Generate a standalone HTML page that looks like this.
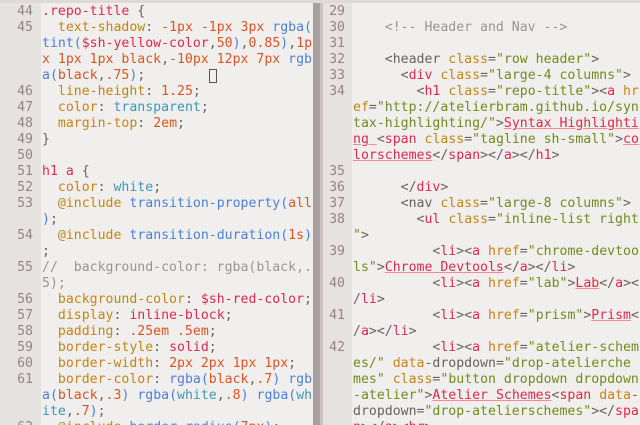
<!DOCTYPE html>
<html><head><meta charset="utf-8"><style>
*{margin:0;padding:0}
body{width:640px;height:425px;overflow:hidden;background:#f1efee;position:relative;font-family:"DejaVu Sans Mono","Liberation Mono",monospace;font-size:13.2px;color:#68615e}
.top{position:absolute;left:0;top:0;width:640px;height:3px;background:#dedad8}
.pane{position:absolute;top:3px;height:422px;overflow:hidden;background:#f1efee}
.g{position:absolute;top:0;height:100%;background:#e6e2e0}
.row{height:16px;line-height:16px;white-space:pre;position:relative}
.n{position:absolute;text-align:right;color:#8e8683}
.t{position:absolute;top:0}
.r{color:#e0284a}.o{color:#df5320}.y{color:#c38418}.b{color:#4d7fd8}.c{color:#3d97b8}.m{color:#9c9491}.s{color:#6f8b1e}
.u{color:#e0284a;text-decoration:underline;text-decoration-color:#f08c9a}
.cur{display:inline-block;width:8px;height:14px;border:1px solid #555;box-sizing:border-box;vertical-align:middle;position:absolute;left:209px;top:1px}
</style></head><body>
<div class="top"></div>
<div class="pane" style="left:0;width:313px">
<div class="g" style="left:0;width:41px"></div>
<div style="position:absolute;left:0;top:1px;width:313px">
<div class="row"><span class="n" style="width:33px">44</span><span class="t" style="left:42px"><span class="r">.repo-title</span> {</span></div>
<div class="row"><span class="n" style="width:33px">45</span><span class="t" style="left:42px">  <span class="y">text-shadow</span>: <span class="o">-1px -1px 3px</span> <span class="b">rgba(</span></span></div>
<div class="row"><span class="t" style="left:42px"><span class="b">tint(</span><span class="r">$sh-yellow-color</span>,<span class="o">50</span><span class="b">)</span>,<span class="o">0.85</span><span class="b">)</span>,<span class="o">1p</span></span></div>
<div class="row"><span class="t" style="left:42px"><span class="o">x 1px 1px black</span>,<span class="o">-10px 12px 7px</span> <span class="b">rgb</span></span></div>
<div class="row"><span class="t" style="left:42px"><span class="b">a(</span><span class="o">black</span>,<span class="o">.75</span><span class="b">)</span>;</span><span class="cur"></span></div>
<div class="row"><span class="n" style="width:33px">46</span><span class="t" style="left:42px">  <span class="y">line-height</span>: <span class="o">1.25</span>;</span></div>
<div class="row"><span class="n" style="width:33px">47</span><span class="t" style="left:42px">  <span class="y">color</span>: <span class="c">transparent</span>;</span></div>
<div class="row"><span class="n" style="width:33px">48</span><span class="t" style="left:42px">  <span class="y">margin-top</span>: <span class="o">2em</span>;</span></div>
<div class="row"><span class="n" style="width:33px">49</span><span class="t" style="left:42px">}</span></div>
<div class="row"><span class="n" style="width:33px">50</span></div>
<div class="row"><span class="n" style="width:33px">51</span><span class="t" style="left:42px"><span class="r">h1 a</span> {</span></div>
<div class="row"><span class="n" style="width:33px">52</span><span class="t" style="left:42px">  <span class="y">color</span>: <span class="c">white</span>;</span></div>
<div class="row"><span class="n" style="width:33px">53</span><span class="t" style="left:42px">  <span class="y">@include</span> <span class="b">transition-property(</span><span class="o">all</span></span></div>
<div class="row"><span class="t" style="left:42px"><span class="b">)</span>;</span></div>
<div class="row"><span class="n" style="width:33px">54</span><span class="t" style="left:42px">  <span class="y">@include</span> <span class="b">transition-duration(</span><span class="o">1s</span><span class="b">)</span></span></div>
<div class="row"><span class="t" style="left:42px">;</span></div>
<div class="row"><span class="n" style="width:33px">55</span><span class="t m" style="left:42px">//  background-color: rgba(black,.</span></div>
<div class="row"><span class="t m" style="left:42px">5);</span></div>
<div class="row"><span class="n" style="width:33px">56</span><span class="t" style="left:42px">  <span class="y">background-color</span>: <span class="r">$sh-red-color</span>;</span></div>
<div class="row"><span class="n" style="width:33px">57</span><span class="t" style="left:42px">  <span class="y">display</span>: <span class="r">inline-block</span>;</span></div>
<div class="row"><span class="n" style="width:33px">58</span><span class="t" style="left:42px">  <span class="y">padding</span>: <span class="o">.25em .5em</span>;</span></div>
<div class="row"><span class="n" style="width:33px">59</span><span class="t" style="left:42px">  <span class="y">border-style</span>: <span class="r">solid</span>;</span></div>
<div class="row"><span class="n" style="width:33px">60</span><span class="t" style="left:42px">  <span class="y">border-width</span>: <span class="o">2px 2px 1px 1px</span>;</span></div>
<div class="row"><span class="n" style="width:33px">61</span><span class="t" style="left:42px">  <span class="y">border-color</span>: <span class="b">rgba(</span><span class="o">black</span>,<span class="o">.7</span><span class="b">)</span> <span class="b">rgb</span></span></div>
<div class="row"><span class="t" style="left:42px"><span class="b">a(</span><span class="o">black</span>,<span class="o">.3</span><span class="b">)</span> <span class="b">rgba(</span><span class="c">white</span>,<span class="o">.8</span><span class="b">)</span> <span class="b">rgba(</span><span class="c">wh</span></span></div>
<div class="row"><span class="t" style="left:42px"><span class="c">ite</span>,<span class="o">.7</span><span class="b">)</span>;</span></div>
<div class="row"><span class="n" style="width:33px">62</span><span class="t" style="left:42px">  <span class="y">@include</span> <span class="b">border-radius(</span><span class="o">7px</span><span class="b">)</span>;</span></div>
</div>
</div>
<div style="position:absolute;left:313px;top:3px;width:7px;height:422px;background:#a8a19f"></div>
<div class="pane" style="left:320px;width:320px">
<div class="g" style="left:0;width:32px"></div>
<div class="g" style="left:0;width:3px;background:#c9c4c1"></div>
<div style="position:absolute;left:0;top:1px;width:320px">
<div class="row"><span class="n" style="width:25px">29</span></div>
<div class="row"><span class="n" style="width:25px">30</span><span class="t m" style="left:33px">    &lt;!-- Header and Nav --&gt;</span></div>
<div class="row"><span class="n" style="width:25px">31</span></div>
<div class="row"><span class="n" style="width:25px">32</span><span class="t" style="left:33px">    &lt;header <span class="y">class</span>=<span class="s">"row header"</span>&gt;</span></div>
<div class="row"><span class="n" style="width:25px">33</span><span class="t" style="left:33px">      &lt;<span class="r">div</span> <span class="y">class</span>=<span class="s">"large-4 columns"</span>&gt;</span></div>
<div class="row"><span class="n" style="width:25px">34</span><span class="t" style="left:33px">        &lt;<span class="r">h1</span> <span class="y">class</span>=<span class="s">"repo-title"</span>&gt;&lt;<span class="r">a</span> <span class="y">hr</span></span></div>
<div class="row"><span class="t" style="left:33px"><span class="y">ef</span>=<span class="s">"http://atelierbram.github.io/syn</span></span></div>
<div class="row"><span class="t" style="left:33px"><span class="s">tax-highlighting/"</span>&gt;<span class="u">Syntax Highlighti</span></span></div>
<div class="row"><span class="t" style="left:33px"><span class="u">ng </span>&lt;<span class="r">span</span> <span class="y">class</span>=<span class="s">"tagline sh-small"</span>&gt;<span class="u">co</span></span></div>
<div class="row"><span class="t" style="left:33px"><span class="u">lorschemes</span>&lt;/<span class="r">span</span>&gt;&lt;/<span class="r">a</span>&gt;&lt;/<span class="r">h1</span>&gt;</span></div>
<div class="row"><span class="n" style="width:25px">35</span></div>
<div class="row"><span class="n" style="width:25px">36</span><span class="t" style="left:33px">      &lt;/<span class="r">div</span>&gt;</span></div>
<div class="row"><span class="n" style="width:25px">37</span><span class="t" style="left:33px">      &lt;nav <span class="y">class</span>=<span class="s">"large-8 columns"</span>&gt;</span></div>
<div class="row"><span class="n" style="width:25px">38</span><span class="t" style="left:33px">        &lt;<span class="r">ul</span> <span class="y">class</span>=<span class="s">"inline-list right</span></span></div>
<div class="row"><span class="t" style="left:33px"><span class="s">"</span>&gt;</span></div>
<div class="row"><span class="n" style="width:25px">39</span><span class="t" style="left:33px">          &lt;<span class="r">li</span>&gt;&lt;<span class="r">a</span> <span class="y">href</span>=<span class="s">"chrome-devtoo</span></span></div>
<div class="row"><span class="t" style="left:33px"><span class="s">ls"</span>&gt;<span class="u">Chrome Devtools</span>&lt;/<span class="r">a</span>&gt;&lt;/<span class="r">li</span>&gt;</span></div>
<div class="row"><span class="n" style="width:25px">40</span><span class="t" style="left:33px">          &lt;<span class="r">li</span>&gt;&lt;<span class="r">a</span> <span class="y">href</span>=<span class="s">"lab"</span>&gt;<span class="u">Lab</span>&lt;/<span class="r">a</span>&gt;&lt;</span></div>
<div class="row"><span class="t" style="left:33px">/<span class="r">li</span>&gt;</span></div>
<div class="row"><span class="n" style="width:25px">41</span><span class="t" style="left:33px">          &lt;<span class="r">li</span>&gt;&lt;<span class="r">a</span> <span class="y">href</span>=<span class="s">"prism"</span>&gt;<span class="u">Prism</span>&lt;</span></div>
<div class="row"><span class="t" style="left:33px">/<span class="r">a</span>&gt;&lt;/<span class="r">li</span>&gt;</span></div>
<div class="row"><span class="n" style="width:25px">42</span><span class="t" style="left:33px">          &lt;<span class="r">li</span>&gt;&lt;<span class="r">a</span> <span class="y">href</span>=<span class="s">"atelier-schem</span></span></div>
<div class="row"><span class="t" style="left:33px"><span class="s">es/"</span> <span class="y">data</span>-dropdown=<span class="s">"drop-atelierche</span></span></div>
<div class="row"><span class="t" style="left:33px"><span class="s">mes"</span> <span class="y">class</span>=<span class="s">"button dropdown dropdown</span></span></div>
<div class="row"><span class="t" style="left:33px"><span class="s">-atelier"</span>&gt;<span class="u">Atelier Schemes</span>&lt;<span class="r">span</span> <span class="y">data</span>-</span></div>
<div class="row"><span class="t" style="left:33px">dropdown=<span class="s">"drop-atelierschemes"</span>&gt;&lt;/<span class="r">spa</span></span></div>
<div class="row"><span class="t" style="left:33px"><span class="r">n</span>&gt;&lt;/<span class="r">a</span>&gt;&lt;<span class="r">br</span>&gt;</span></div>
</div>
</div>
</body></html>
